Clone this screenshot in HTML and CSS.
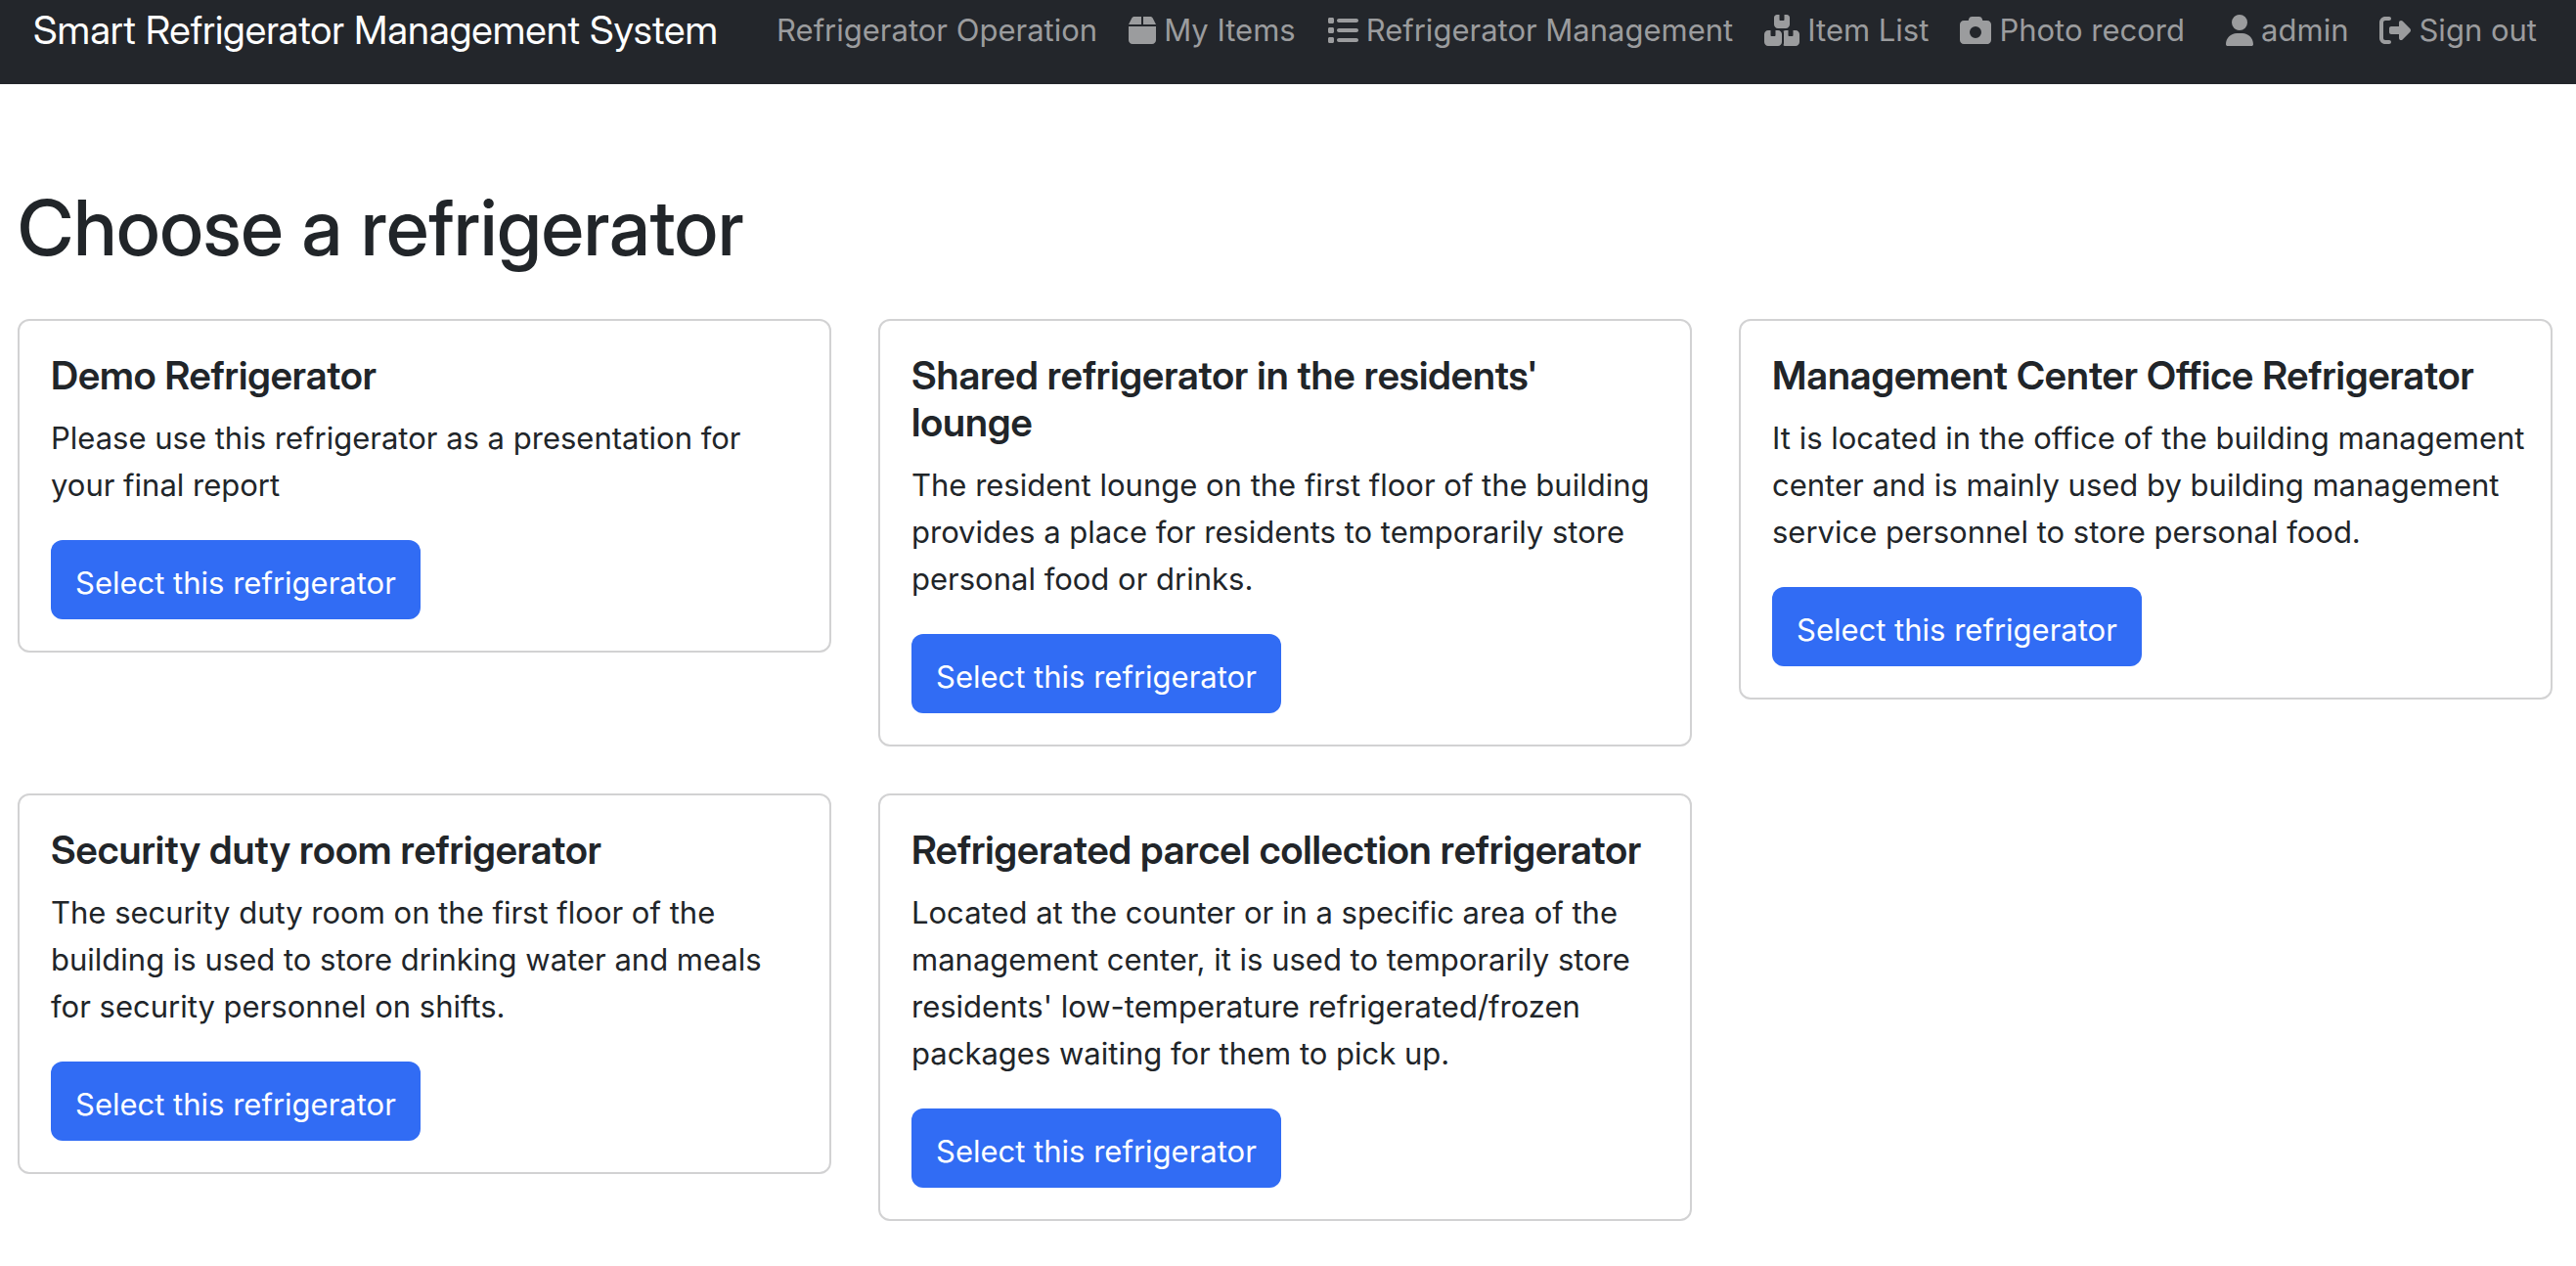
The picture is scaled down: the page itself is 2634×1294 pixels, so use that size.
FILE: index.html
```html
<!DOCTYPE html>
<html lang="en">
<head>
<meta charset="utf-8">
<title>Smart Refrigerator Management System</title>
<meta name="viewport" content="width=device-width, initial-scale=1">
<link rel="stylesheet" href="styles.css">
</head>
<body>
<nav class="navbar">
  <a class="navbar-brand" href="#">Smart Refrigerator Management System</a>
  <ul class="nav-list nav-main">
    <li><a class="nav-link" href="#">Refrigerator Operation</a></li>
    <li><a class="nav-link" href="#"><svg class="icon" viewBox="0 0 448 512" aria-hidden="true"><path d="M50.7 58.5L0 160H208V32H93.7C75.5 32 58.9 42.3 50.7 58.5zM240 160H448L397.3 58.5C389.1 42.3 372.5 32 354.3 32H240V160zm208 32H0V416c0 35.3 28.7 64 64 64H384c35.3 0 64-28.7 64-64V192z"/></svg>My Items</a></li>
    <li><a class="nav-link" href="#"><svg class="icon" viewBox="0 0 512 512" aria-hidden="true"><path d="M40 48C26.7 48 16 58.7 16 72v48c0 13.3 10.7 24 24 24H88c13.3 0 24-10.7 24-24V72c0-13.3-10.7-24-24-24H40zM192 64c-17.7 0-32 14.3-32 32s14.3 32 32 32H480c17.7 0 32-14.3 32-32s-14.3-32-32-32H192zm0 160c-17.7 0-32 14.3-32 32s14.3 32 32 32H480c17.7 0 32-14.3 32-32s-14.3-32-32-32H192zm0 160c-17.7 0-32 14.3-32 32s14.3 32 32 32H480c17.7 0 32-14.3 32-32s-14.3-32-32-32H192zM16 232v48c0 13.3 10.7 24 24 24H88c13.3 0 24-10.7 24-24V232c0-13.3-10.7-24-24-24H40c-13.3 0-24 10.7-24 24zM40 368c-13.3 0-24 10.7-24 24v48c0 13.3 10.7 24 24 24H88c13.3 0 24-10.7 24-24V392c0-13.3-10.7-24-24-24H40z"/></svg>Refrigerator Management</a></li>
    <li><a class="nav-link" href="#"><svg class="icon" viewBox="0 0 576 512" aria-hidden="true"><path d="M248 0H208c-26.5 0-48 21.5-48 48V160c0 35.3 28.7 64 64 64H352c35.3 0 64-28.7 64-64V48c0-26.5-21.5-48-48-48H328V80c0 8.8-7.2 16-16 16H264c-8.8 0-16-7.2-16-16V0zM64 256c-35.3 0-64 28.7-64 64V448c0 35.3 28.7 64 64 64H224c35.3 0 64-28.7 64-64V320c0-35.3-28.7-64-64-64H184v80c0 8.8-7.2 16-16 16H120c-8.8 0-16-7.2-16-16V256H64zM352 512H512c35.3 0 64-28.7 64-64V320c0-35.3-28.7-64-64-64H472v80c0 8.8-7.2 16-16 16H408c-8.8 0-16-7.2-16-16V256H352c-15 0-28.8 5.1-39.7 13.8c4.9 10.4 7.7 22 7.7 34.2V464c0 12.2-2.8 23.8-7.7 34.2C323.2 506.9 337 512 352 512z"/></svg>Item List</a></li>
    <li><a class="nav-link" href="#"><svg class="icon" viewBox="0 0 512 512" aria-hidden="true"><path d="M149.1 64.8L138.7 96H64C28.7 96 0 124.7 0 160V416c0 35.3 28.7 64 64 64H448c35.3 0 64-28.7 64-64V160c0-35.3-28.7-64-64-64H373.3L362.9 64.8C356.4 45.2 338.1 32 317.4 32H194.6c-20.7 0-39 13.2-45.5 32.8zM256 192a96 96 0 1 1 0 192 96 96 0 1 1 0-192z"/></svg>Photo record</a></li>
  </ul>
  <ul class="nav-list">
    <li><a class="nav-link" href="#"><svg class="icon" viewBox="0 0 448 512" aria-hidden="true"><path d="M224 256A128 128 0 1 0 224 0a128 128 0 1 0 0 256zm-45.7 48C79.8 304 0 383.8 0 482.3C0 498.7 13.3 512 29.7 512H418.3c16.4 0 29.7-13.3 29.7-29.7C448 383.8 368.2 304 269.7 304H178.3z"/></svg>admin</a></li>
    <li><a class="nav-link" href="#"><svg class="icon" viewBox="0 0 512 512" aria-hidden="true"><path d="M377.9 105.9L500.7 228.7c7.2 7.2 11.3 17.1 11.3 27.3s-4.1 20.1-11.3 27.3L377.9 406.1c-6.4 6.4-15 9.9-24 9.9c-18.7 0-33.9-15.2-33.9-33.9l0-62.1-128 0c-17.7 0-32-14.3-32-32l0-64c0-17.7 14.3-32 32-32l128 0 0-62.1c0-18.7 15.2-33.9 33.9-33.9c9 0 17.6 3.6 24 9.9zM160 96L96 96c-17.7 0-32 14.3-32 32l0 256c0 17.7 14.3 32 32 32l64 0c17.7 0 32 14.3 32 32s-14.3 32-32 32l-64 0c-53 0-96-43-96-96L0 128C0 75 43 32 96 32l64 0c17.7 0 32 14.3 32 32s-14.3 32-32 32z"/></svg>Sign out</a></li>
  </ul>
</nav>
<main class="page">
  <h1 class="page-title">Choose a refrigerator</h1>
  <div class="card-grid">
    <article class="card">
      <h2 class="card-title">Demo Refrigerator</h2>
      <p class="card-text">Please use this refrigerator as a presentation for your final report</p>
      <button class="btn" type="button">Select this refrigerator</button>
    </article>
    <article class="card">
      <h2 class="card-title">Shared refrigerator in the residents' lounge</h2>
      <p class="card-text">The resident lounge on the first floor of the building provides a place for residents to temporarily store personal food or drinks.</p>
      <button class="btn" type="button">Select this refrigerator</button>
    </article>
    <article class="card">
      <h2 class="card-title">Management Center Office Refrigerator</h2>
      <p class="card-text">It is located in the office of the building management center and is mainly used by building management service personnel to store personal food.</p>
      <button class="btn" type="button">Select this refrigerator</button>
    </article>
    <article class="card">
      <h2 class="card-title">Security duty room refrigerator</h2>
      <p class="card-text">The security duty room on the first floor of the building is used to store drinking water and meals for security personnel on shifts.</p>
      <button class="btn" type="button">Select this refrigerator</button>
    </article>
    <article class="card">
      <h2 class="card-title">Refrigerated parcel collection refrigerator</h2>
      <p class="card-text">Located at the counter or in a specific area of the management center, it is used to temporarily store residents' low-temperature refrigerated/frozen packages waiting for them to pick up.</p>
      <button class="btn" type="button">Select this refrigerator</button>
    </article>
  </div>
</main>
</body>
</html>
```

FILE: styles.css
```css
* {
  box-sizing: border-box;
}

body {
  margin: 0;
  background: #fff;
  color: #212529;
  font-family: Inter, "Liberation Sans", sans-serif;
  font-size: 31px;
  line-height: 48px;
}

.navbar-brand,
.page-title,
.card-title {
  font-family: "Inter Display", Inter, "Liberation Sans", sans-serif;
}

.navbar {
  display: flex;
  align-items: center;
  padding: 1px 40px 25px 34px;
  background: #23262b;
}

.navbar-brand {
  margin-right: 60px;
  color: #fff;
  font-size: 40px;
  line-height: 60px;
  text-decoration: none;
  white-space: nowrap;
}

.nav-list {
  display: flex;
  gap: 32px;
  margin: 0;
  padding: 0;
  list-style: none;
}

.nav-main {
  margin-right: auto;
}

.nav-link {
  display: flex;
  align-items: center;
  gap: 8px;
  color: #9b9c9e;
  text-decoration: none;
  white-space: nowrap;
}

.icon {
  display: block;
  height: 32px;
  fill: currentColor;
}

.page {
  padding: 98px 24px 48px 18px;
}

.page-title {
  margin: 0 0 46px;
  font-size: 79px;
  font-weight: 500;
  line-height: 96px;
}

.card-grid {
  display: grid;
  grid-template-columns: repeat(3, minmax(0, 1fr));
  align-items: start;
  gap: 48px;
}

.card {
  padding: 32px;
  border: 2px solid #d2d2d3;
  border-radius: 12px;
}

.card-title {
  margin: 0 0 16px;
  font-size: 40px;
  font-weight: 600;
  line-height: 48px;
}

.card-text {
  margin: 0 -12px 32px 0;
}

.btn {
  display: block;
  padding: 20px 25px 13px;
  border: 0;
  border-radius: 12px;
  background: #316cf4;
  color: #fff;
  font: inherit;
  cursor: pointer;
}
```
